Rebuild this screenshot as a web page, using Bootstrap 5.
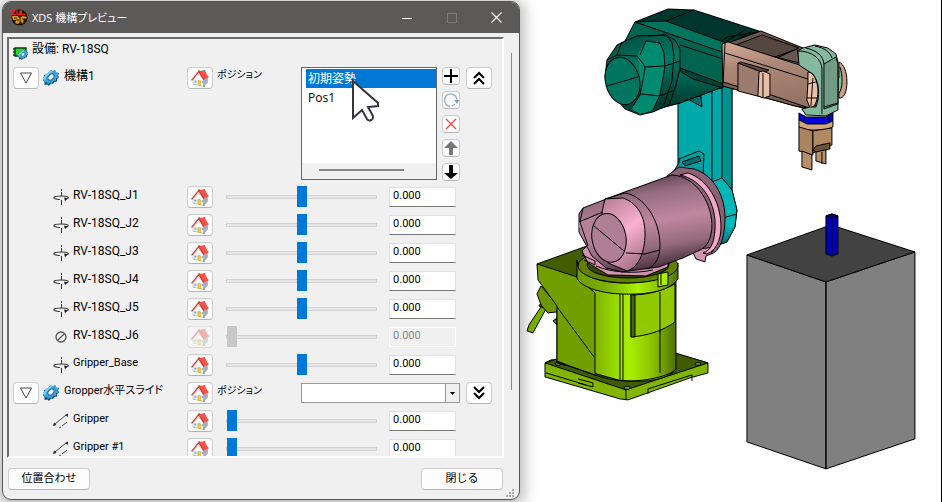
<!DOCTYPE html>
<html lang="ja">
<head>
<meta charset="utf-8">
<meta name="viewport" content="width=device-width, initial-scale=1">
<title>XDS 機構プレビュー</title>
<link href="https://cdn.jsdelivr.net/npm/bootstrap@5.3.0/dist/css/bootstrap.min.css" rel="stylesheet">
<style>
body{font-family:Roboto,"Noto Sans CJK JP",sans-serif;font-size:12px;line-height:16px;color:#000;background:#fefefe;font-feature-settings:"palt"}
.app-window{flex:0 0 55%;min-width:0;margin:1px 0 2px 2px;background:#f0f0f0;border:1px solid #555;border-radius:9px;box-shadow:0 2px 14px 4px rgba(0,0,0,.28);overflow:hidden;z-index:1}
.title-strip{height:31px;background:#5b5a58;color:#fff}
.title-text{font-family:"Open Sans","Noto Sans CJK JP",sans-serif;font-size:11px;line-height:16px}
.win-btn{width:45px;height:31px;padding:0;border:0;background:none;color:#fff}
.win-body{min-height:0}
.work-panel{border:2px solid;border-color:#6a6a6a #fff #fff #6a6a6a;overflow:hidden;min-height:0;min-width:0}
.side-track{width:15px;padding:16px 7px 68px 7px}
.side-thumb{width:2px;background:#888}
.tool-btn{background:#fdfdfd;border:1px solid #ccc;border-bottom-color:#b5b5b5;border-radius:4px;padding:0;color:#000;font-size:11px;line-height:16px}
.tool-btn svg,.win-btn svg{display:block;margin:auto}
.sq-btn{width:26px;height:22px;flex:none}
.chev-btn{margin:0 10px 0 6px}
.mini-col{gap:6px;margin-left:5px}
.mini-btn{width:18px;height:18px;flex:none}
.foot-bar{padding:10px 16px 9px 5px}
.foot-btn{width:82px;height:22px}
.device-row{padding-top:2px}
.sheet-row{height:28px;flex:none}
.group-row{padding:6px 0 2px}
.name-col{flex:0 0 174px}
.joint-name{padding-left:40px}
.group-name{padding-left:5px}
.label-text{padding-bottom:4px}
.small-label{font-size:11px}
.pos-label{width:88px;flex:none;font-size:10px;padding-bottom:4px}
.tail-col{width:46px;flex:none}
.num-box{width:67px;height:20px;border:1px solid #e2e2e2;border-bottom:1px solid #777;background:#fff;padding:0 3px 4px;font-size:11px;line-height:14px;border-radius:0;flex:none}
.num-box:disabled{background:#f0f0f0;color:#888;border-color:#fff}
.axis-slider{appearance:none;-webkit-appearance:none;background:none;height:22px;min-width:0;flex:1 1 0;margin:0 12px 0 13px}
.axis-slider::-webkit-slider-runnable-track{height:4px;background:#e7e7e7;border:1px solid #d3d3d5}
.axis-slider::-webkit-slider-thumb{-webkit-appearance:none;width:10px;height:21px;margin-top:-10px;background:#0078d7;border:0;border-radius:0}
.axis-slider:disabled::-webkit-slider-thumb{background:#c8c8c8}
.faded{opacity:.4}
.pos-list{height:113px;border:1px solid #666;background:#fff;flex:1 1 0;min-width:0;padding:1px 0 0 4px}
.pos-item{height:19px;padding:0 2px;border:0;background:#fff;color:#000;text-align:left;width:100%;font-family:"Open Sans","Noto Sans CJK JP",sans-serif;font-size:12px;line-height:19px}
.pos-item.chosen{background:#0078d7;color:#fff}
.list-foot{margin-left:-4px;height:16px;background:#f0f0f0;padding:6px 32px 0 17px}
.list-foot div{height:2px;background:#888}
.pointer{left:49px;top:11px;z-index:2}
.combo-box{min-width:0;height:20px;border:1px solid #999;border-radius:0;appearance:none;-webkit-appearance:none;background:#fff;width:100%}
.combo-arrow{right:1px;top:1px;width:14px;height:18px;background:#f0f0f0;border-left:1px solid #999;pointer-events:none}
.scene{min-width:0;border-right:1px solid #000}
.scene svg{display:block;width:100%;height:100vh}
</style>
<script src="https://cdn.jsdelivr.net/npm/bootstrap@5.3.0/dist/js/bootstrap.bundle.min.js"></script>
</head>
<body>
<svg width="0" height="0" class="position-absolute" aria-hidden="true">
  <symbol id="home" viewBox="0 0 17 16">
    <path d="M2 9l5-5 5 5v6.500L2 13z" fill="#fff" stroke="#b5b5b5" stroke-width=".6"/>
    <path d="M12 9l3.500-1.500V12L12 15.500z" fill="#b4b4b4" stroke="#8a8a8a" stroke-width=".5"/>
    <path d="M7 1l6-.8L16.500 7 12 9z" fill="#f4534a"/>
    <path d="M.8 9.500L7.300 1.500 12.300 9" fill="none" stroke="#e0382f" stroke-width="1.300"/>
    <path d="M7 .6h1.500M12 .5h1.500M15.500 6.500h1.200M.3 9.500h1M2.500 13.500h1M11.500 15.300h1.500" stroke="#32a53a" stroke-width="1"/>
    <path d="M6.500 10h2.500v5l-2.500-.7z" fill="#f0cf3c" stroke="#c29a26" stroke-width=".5"/>
    <path d="M3.200 10h2v2h-2zM10 10.500h1.300v2H10zM13 9.500h1.300v2H13z" fill="#7facec"/>
  </symbol>
  <symbol id="gear" viewBox="0 0 16 16">
    <path d="M6 2l2-2 1.500 1.500L12 0l1 2.500 3 .5-1 2.500 1 2-2 1.500v2.500l-2.500.5-1.500 2-2-.5L6 16l-1.500-1.500L1.500 15 1.500 12 0 10l1.500-2L1 5l3-.5z" fill="#174b78"/>
    <path d="M6 2l2-2 1.500 1.500L12 0l1 2.500 2.500.5-1 2.500.5 2-2 1v2l-2.500.5-1.500 2-2-.5L5 14l-1.500-2-2.500.5.500-3L0 8l2-2L2 4l3-.5z" fill="#3aa5dd"/>
    <path d="M6 2l2-2 1.500 1.500L7 4 3 7 2 11 0 8l2-2V4l3-.5z" fill="#79d2ef"/>
    <ellipse cx="8" cy="7" rx="3.600" ry="2.500" transform="rotate(-50 8 7)" fill="#f4f8fb" stroke="#1c6398"/>
  </symbol>
  <symbol id="rot" viewBox="0 0 16 16"><path d="M8.500 0v2M8.500 3v4M8.500 11v5" stroke="#333" fill="none"/><path d="M7 10.500C-2 10-1 7 8 7c8 0 9 2 5 3" stroke="#333" fill="none" stroke-width="1.100"/><path d="M11 8.500l4 1-3 2.500z" fill="#222"/></symbol>
  <symbol id="lin" viewBox="0 0 16 16"><path d="M2 11L13 2M6 15l2-1M9 13l5-4" stroke="#444" fill="none"/><path d="M15 .5v3.500l-3-2zM0 13l1-3.500 2.500 2.500z" fill="#222"/></symbol>
</svg>

<main class="d-flex vh-100 overflow-hidden">
  <section class="app-window d-flex flex-column">
    <header class="title-strip d-flex align-items-center flex-shrink-0">
      <svg class="ms-2" width="17" height="17" viewBox="0 0 17 17"><circle cx="8.500" cy="8.500" r="8" fill="#17110b"/><path d="M1 7h6l1 2 4-2 4 1-1 2h-3l1 2-2 3-1-3-3 3-3-1 1-3H2z" fill="#d79720"/><path d="M3 9h3M9 7v8M5 11h3M11 10h4M12 13h2" stroke="#3c250a"/><path d="M1 1.500h3M1 5l3-3M1 5.500h4M6 1.500v4h3v-4M10.500 1v4.500h4" stroke="#f12018" stroke-width="1.400" fill="none"/></svg>
      <h1 class="title-text m-0 ms-1 fw-normal flex-grow-1">XDS 機構プレビュー</h1>
      <button class="win-btn" aria-label="最小化"><svg width="10" height="10"><path d="M0 5.500h10" stroke="#fff"/></svg></button>
      <button class="win-btn" aria-label="最大化"><svg width="10" height="10"><rect x=".5" y=".5" width="9" height="9" fill="none" stroke="#85797f"/></svg></button>
      <button class="win-btn" aria-label="閉じる"><svg width="11" height="11"><path d="M.5.500l10 10M10.500.500l-10 10" stroke="#fff" stroke-width="1.200"/></svg></button>
    </header>

    <div class="win-body d-flex flex-grow-1 pt-1 ps-1">
      <div class="work-panel flex-grow-1 d-flex flex-column">
        <div class="device-row d-flex align-items-center flex-shrink-0 ps-1">
          <svg class="mt-1" width="15" height="14" viewBox="0 0 15 14"><path d="M2 2h11v8H2z" fill="#27d827" stroke="#063b06" stroke-width="1.400"/><path d="M0 3h2M0 6h2M0 9h2" stroke="#063b06" stroke-width="1.500"/><use href="#gear" x="5" y="4" width="10" height="10"/></svg>
          <span class="ps-1 label-text">設備: RV-18SQ</span>
        </div>

        <div class="d-flex flex-shrink-0 align-items-start group-row ps-1">
          <div class="name-col d-flex align-items-center">
            <button class="tool-btn sq-btn" aria-label="展開"><svg width="14" height="12"><path d="M1.500 1h11L7 11z" fill="#fff" stroke="#444"/></svg></button>
            <svg class="ms-1" width="16" height="16"><use href="#gear"/></svg>
            <span class="group-name label-text">機構1</span>
          </div>
          <button class="tool-btn sq-btn" aria-label="原点"><svg width="18" height="17"><use href="#home"/></svg></button>
          <span class="pos-label ps-1">ポジション</span>
          <div class="pos-list position-relative d-flex flex-column" role="listbox" aria-label="ポジション">
            <button class="pos-item chosen" role="option" aria-selected="true">初期姿勢</button>
            <button class="pos-item" role="option" aria-selected="false">Pos1</button>
            <div class="list-foot mt-auto"><div></div></div>
            <svg class="pointer position-absolute" width="30" height="46" viewBox="0 0 30 46"><path d="M2 2v37l9-8 5 9c2 3 7 1 6-3l-5-9 10-1v-3z" fill="#fff" stroke="#343440" stroke-width="2"/></svg>
          </div>
          <div class="mini-col d-flex flex-column">
            <button class="tool-btn mini-btn" aria-label="追加"><svg width="14" height="14"><path d="M0 7h14M7 0v14" stroke="#000" stroke-width="2"/></svg></button>
            <button class="tool-btn mini-btn" aria-label="更新"><svg width="16" height="16"><path d="M7 14.500A6.300 6.300 0 1 1 14 8M9 14l3-2" fill="none" stroke="#9db4cc" stroke-width="1.500"/><path d="M11 8h5l-2 4z" fill="#7d9dc0"/></svg></button>
            <button class="tool-btn mini-btn" aria-label="削除"><svg width="12" height="12"><path d="M1 1l10 10M11 1L1 11" stroke="#f04a42" stroke-width="1.400"/></svg></button>
            <button class="tool-btn mini-btn" aria-label="上へ"><svg width="14" height="16"><path d="M7 1l7 7h-5v7H5V8H0z" fill="#777"/></svg></button>
            <button class="tool-btn mini-btn" aria-label="下へ"><svg width="14" height="16"><path d="M7 15l7-6H9V1H5v8H0z" fill="#000"/></svg></button>
          </div>
          <button class="tool-btn sq-btn chev-btn" aria-label="折りたたむ"><svg width="12" height="14"><path d="M1 7l5-5 5 5M1 13l5-5 5 5" stroke="#000" stroke-width="2" fill="none"/></svg></button>
        </div>

        <div id="joints" class="d-flex flex-column flex-shrink-0"></div>

        <div class="sheet-row d-flex align-items-center ps-1">
          <div class="name-col d-flex align-items-center">
            <button class="tool-btn sq-btn" aria-label="展開"><svg width="14" height="12"><path d="M1.500 1h11L7 11z" fill="#fff" stroke="#444"/></svg></button>
            <svg class="ms-1" width="16" height="16"><use href="#gear"/></svg>
            <label for="slidePos" class="group-name label-text small-label">Gropper水平スライド</label>
          </div>
          <button class="tool-btn sq-btn" aria-label="原点"><svg width="18" height="17"><use href="#home"/></svg></button>
          <span class="pos-label ps-1">ポジション</span>
          <div class="position-relative flex-grow-1"><select id="slidePos" class="combo-box d-block"><option></option></select><span class="combo-arrow position-absolute d-flex align-items-center justify-content-center"><svg width="5" height="3"><path d="M0 0h5L2.500 3z"/></svg></span></div>
          <button class="tool-btn sq-btn chev-btn" aria-label="展開"><svg width="12" height="14"><path d="M1 1l5 5 5-5M1 7l5 5 5-5" stroke="#000" stroke-width="2" fill="none"/></svg></button>
        </div>

        <div id="grips" class="d-flex flex-column flex-shrink-0"></div>
      </div>
      <div class="side-track d-flex"><div class="side-thumb"></div></div>
    </div>

    <footer class="foot-bar d-flex justify-content-between flex-shrink-0 position-relative">
      <button class="tool-btn foot-btn">位置合わせ</button>
      <button class="tool-btn foot-btn">閉じる</button>
      <svg class="position-absolute bottom-0 end-0 me-1" width="9" height="10"><path d="M6 1h2M3 4h2M6 4h2M0 7h2M3 7h2M6 7h2" stroke="#aaa" stroke-width="2"/></svg>
    </footer>
  </section>

  <section class="scene flex-grow-1" aria-label="3Dビュー">
    <svg viewBox="520 0 421 502" preserveAspectRatio="xMinYMin meet" stroke="#000" stroke-width="1" stroke-linejoin="round" shape-rendering="crispEdges">
      <defs>
        <linearGradient id="gLime"><stop offset="0" stop-color="#6f9c00"/><stop offset=".3" stop-color="#7db000"/><stop offset=".6" stop-color="#a8f000"/><stop offset=".8" stop-color="#8cc400"/><stop offset="1" stop-color="#4e7000"/></linearGradient>
        <linearGradient id="gPink" x1=".35" y1="0" x2=".6" y2="1"><stop offset="0" stop-color="#4d3542"/><stop offset=".22" stop-color="#966c80"/><stop offset=".5" stop-color="#c088a0"/><stop offset=".75" stop-color="#946a7d"/><stop offset="1" stop-color="#38242e"/></linearGradient>
        <linearGradient id="gRing" x1=".2" y1="0" x2=".6" y2="1"><stop offset="0" stop-color="#b98298"/><stop offset=".5" stop-color="#fcb0d0"/><stop offset="1" stop-color="#a8748a"/></linearGradient>
        <linearGradient id="gTeal" x1="0" y1="0" x2=".3" y2="1"><stop offset="0" stop-color="#00443a"/><stop offset=".5" stop-color="#007a63"/><stop offset="1" stop-color="#003a30"/></linearGradient>
        <linearGradient id="gTeal2" x1="0" y1="0" x2="0" y2="1"><stop offset="0" stop-color="#00745f"/><stop offset="1" stop-color="#003129"/></linearGradient>
        <linearGradient id="gTan" x1="0" y1="0" x2=".2" y2="1"><stop offset="0" stop-color="#d6ab94"/><stop offset=".4" stop-color="#ad8878"/><stop offset="1" stop-color="#947264"/></linearGradient>
        <linearGradient id="gCyan" x1="0" y1="0" x2="0" y2="1"><stop offset="0" stop-color="#00b4b4"/><stop offset=".7" stop-color="#00bcbc"/><stop offset="1" stop-color="#006c6c"/></linearGradient>
      </defs>

      <!-- upright column -->
      <path d="M678 88h54v102l5 20-2 17-8 15-9 3-40-60z" fill="#00a9a9"/>
      <path d="M722 86h10v104l-10-12z" fill="#009292"/>
      <path d="M712 90v92M722 178l10 12" fill="none"/>
      <path d="M712 182l10-4 10 12 5 20-2 17-8 15-9 3z" fill="url(#gCyan)"/>
      <path d="M723 218l14-4" fill="none"/>
      <path d="M679 159l20-8 5 3-1 24-12-3-17-4 5-8z" fill="#00a0a0"/><path d="M682 162l17-6 2 5-16 5zM686 98l15-2 1 11-7-4z" fill="#006f6f"/><path d="M684 169l16 3" fill="none"/>

      <!-- upper arm housing -->
      <path d="M635 22l33-13 26 1 68 22-35 12z" fill="#00362d"/>
      <path d="M635 22l31-1 60 22v11z" fill="#00745f"/>
      <path d="M666 21l28-11M721 42l6-5 32-5M727 41l18-11M735 41l17-10" fill="none"/>
      <path d="M635 22l90 31-2 34-43 16-26 6-29-68z" fill="#006451"/>
      <path d="M680 68l43 19-43 16-22 6 17-20z" fill="url(#gTeal2)"/>
      <path d="M680 68l33 12 10 4v4l-30-9-12-7z" fill="#004438"/>
      <path d="M605 77l2-17 10-15 8-4 12-5 29-1 9 5 5 9v20l-5 20-6 16-16 7-13 3-15-6-14-16z" fill="url(#gTeal)"/>
      <path d="M638 54l8-13 14 2 4 10 1 14-5 28-7 15-13 4-8-5 9-15z" fill="#008a70" stroke="none"/>
      <path d="M646 41l14 2 4 10 1 14-5 28-7 15M640 55l6-14M607 60l10-5 20 1 7 9 1 4-5 26-7 11M665 66l15-5M644 67l21-1M641 94l19 2 15-6M617 55l5-13M648 36l18-1 6 7 2 14-2 25-8 24" fill="none"/>
      <ellipse cx="622.500" cy="81" rx="17" ry="24" transform="rotate(-14 622.500 81)" fill="#007560"/><path d="M607 86l31-9" fill="none"/>
      <path d="M680 45l43 14" fill="none"/>

      <!-- forearm -->
      <path d="M728 43l33-12 42 17-5 20-75-24z" fill="#6a574e"/>
      <path d="M736 45l26-10 37 13-22 10z" fill="#554640"/>
      <path d="M722 44l6-2 84 27 7 14-1 22-12 4-83-23z" fill="url(#gTan)"/>
      <path d="M725 53l86 27M725 43l-2 43M775 57l22-8 3 14z" fill="none"/>
      <path d="M723 82l23 7 25 6 38 13-14-2-72-20z" fill="#786058"/>
      <path d="M738 63l27 9v26l-27-7z" fill="#9c7c6d"/><path d="M738 63l3-1 28 8-5 3z" fill="#5c4840"/><path d="M759 72l4-1 7 3v22l-6 2-6-2z" fill="#e8bba3"/><path d="M763 73v24"/>
      <path d="M808 72c6 0 10 10 10 19s-3 17-8 17l-3-8 1-18z" fill="#ecc0a8"/><path d="M813 78l-2 28M808 84l8-2M807 98h10" fill="none"/>

      <!-- wrist and gripper -->
      <path d="M839 62c5 2 8 10 8 20s-3 17-8 16z" fill="#c79e86"/><path d="M840 67c3 8 3 22-1 26" fill="#79c4a2"/>
      <path d="M798 51l5-3 12-3 13 3 8 6 2 8v48l-12 6-20-1-4-6 8-2h6c4-10 4-24-3-33l-14-9z" fill="#85b99e"/>
      <path d="M824 64l12-7 2 7v40l-14 5z" fill="#709c85"/>
      <path d="M806 48c12 3 17 8 18 16M815 46c10 2 15 6 17 12M798 51c14 0 24 8 24 18v45M824 107l14-4" fill="none"/>
      <path d="M799 113l7 4h20l7-4v8l-5 3h-22l-7-4z" fill="#0505dc"/><path d="M804 115v8M829 114v9"/>
      <path d="M799 120l8 4h19l7-3v6l-8 3h-20l-6-3z" fill="#d2a580"/>
      <path d="M799 127l14 4v24l-14-4z" fill="#a9845f"/><path d="M813 131l19-3v17l-19 8z" fill="#b08a63"/>
      <path d="M802 151l10 4v15l-10-3zM816 150l10-3v17l-10-3z" fill="#b98f69"/><path d="M813 150l3-4 14-3v6l-14 3z" fill="#6a5138"/><path d="M822 152v12"/>

      <!-- green base -->
      <path d="M545 363l6-3 122-7 35 10v10l-18 5-62 22-8-1-75-22z" fill="#81b500"/>
      <path d="M545 363l12-4 115-7 36 11-64 21-18 6z" fill="#405c00"/>
      <path d="M546 373l40 12M578 379l15 4v4l-15-4M626 390v10M648 394v-5l44-14v6" fill="none"/>
      <ellipse cx="627" cy="388" rx="3" ry="1.500" fill="#81b500"/><ellipse cx="698" cy="364" rx="3" ry="1.500" fill="#6c9800"/><ellipse cx="558" cy="364" rx="3" ry="1.500" fill="#6c9800"/>
      <path d="M537 264l50-18 10 45-21 1z" fill="#425c00"/>
      <path d="M545 309l-6-3 3-5 5 3z" fill="#4e6c00"/>
      <path d="M541 307l5 2-13 24-6-2 2-6z" fill="#7cae00"/>
      <path d="M541 286l17 20-1 6-9 1-7-8-4-11z" fill="#6c9700"/><path d="M557 318l-4 3 4 4z" fill="#5d8200"/>
      <path d="M557 310l20-35h99v94c-8 12-35 14-58 11l-61-17z" fill="url(#gLime)"/>
      <path d="M537 264l40 13 18 16v82l-38-13v-56l-19-26z" fill="#729f00"/>
      <path d="M557 307l37 50M620 292v88M623 292v88M660 291v82M557 361c25 10 48 19 66 20s48-4 54-13" fill="none"/>
      <path d="M631 295c17 0 31-4 44-11v38c-12 9-29 14-44 15z" fill="#91c900"/><path d="M631 295h4v42h-4z" fill="#4b6900"/><path d="M660 292v40"/>
      <path d="M577 260c0 15 21 23 48 23s51-7 53-20v16c-10 14-36 16-58 15s-40-8-43-16z" fill="url(#gLime)"/>
      <ellipse cx="628" cy="266" rx="50" ry="17" fill="#617f00"/><ellipse cx="628" cy="265" rx="41" ry="13" fill="#334800"/>
      <path d="M658 274l10-2v13l-10 2z" fill="#aaf000"/><path d="M661 274v11"/>

      <!-- pink link -->
      <path d="M582 251l8-8 20 17h40l18 3v4l-22 9-38-1-20-12z" fill="#d293ae"/><path d="M582 255l13 6v4l-11-5M596 266c16 7 39 8 57 4" fill="none"/>
      <path d="M667 176l12-9 15 2c20 6 32 28 31 52-1 23-8 32-14 33l-15 1-10-5z" fill="#8a6274"/>
      <path d="M692 250l23-3-4 7-5 2-1 6-9-3z" fill="#d493b0"/>
      <path d="M579 214l4-6 39-15 50-18c23 1 39 26 40 49 0 15-5 24-14 27l-15 7-24 9-37 5-16-4-14-12-13-24z" fill="url(#gPink)"/>
      <path d="M680 175c23 5 37 29 35 55-1 14-5 21-12 23l4 1c9-3 14-14 14-27 0-26-14-48-33-54z" fill="#f0a8c6"/>
      <path d="M579 222l25-9 15-6 10-3 13 9 3 15-4 20-8 12-14 6-18-7-22-32z" fill="#b4839a" stroke="none"/>
      <path d="M602 212l3-13 18-1c14 5 23 18 22 39-1 19-8 31-18 34l-19-8z" fill="url(#gRing)"/>
      <path d="M625 193c19 3 35 27 35 52 0 12-4 20-12 24M626 253l19 1 15-4M605 199l20-6M579 222l24-10M583 208l-3 14 8 24" fill="none"/>
      <ellipse cx="609" cy="238" rx="17" ry="24.500" transform="rotate(-10 609 238)" fill="#af7f95"/><path d="M594 226l30 25" fill="none"/>

      <!-- work block -->
      <path d="M747 255l79 27v187l-79-27zM826 282l89-30v187l-89 30z" fill="#808080"/>
      <path d="M747 255l84-30 84 27-89 30z" fill="#424242"/>
      <path d="M826 216l6-2 6 2v38l-6 2-6-2z" fill="#0000b4"/><path d="M826 216l6 2 6-2-6-2z" fill="#000070"/><path d="M832 218v38"/>
    </svg>
  </section>
</main>
<script>
const icon = {
  rot: '<svg width="16" height="16"><use href="#rot"/></svg>',
  lin: '<svg width="16" height="16"><use href="#lin"/></svg>',
  off: '<svg width="16" height="16"><circle cx="8" cy="8" r="5" fill="none" stroke="#555" stroke-width="1.300"/><path d="M4.500 11.500l7-7" stroke="#555" stroke-width="1.300"/></svg>'
};
function addRow(host, name, kind, value) {
  const off = kind === 'off' ? 'disabled' : '';
  const small = name.startsWith('Gripper') ? 'small-label' : '';
  const id = 'n' + document.querySelectorAll('.axis-slider').length;
  document.getElementById(host).insertAdjacentHTML('beforeend',
    `<div class="sheet-row d-flex align-items-center ps-1">
      <div class="name-col joint-name d-flex align-items-center">${icon[kind]}<label for="${id}" class="label-text ps-1 ${small}">${name}</label></div>
      <button class="tool-btn sq-btn ${off && 'faded'}" aria-label="原点" ${off}><svg width="18" height="17"><use href="#home"/></svg></button>
      <input type="range" class="axis-slider" aria-label="${name}" value="${value}" ${off}>
      <input type="text" id="${id}" class="num-box" value="0.000" ${off}><span class="tail-col"></span>
    </div>`);
}
['J1','J2','J3','J4','J5'].forEach(j => addRow('joints', 'RV-18SQ_' + j, 'rot', 50));
addRow('joints', 'RV-18SQ_J6', 'off', 0);
addRow('joints', 'Gripper_Base', 'rot', 50);
addRow('grips', 'Gripper', 'lin', 0);
addRow('grips', 'Gripper #1', 'lin', 0);
</script>
</body>
</html>
